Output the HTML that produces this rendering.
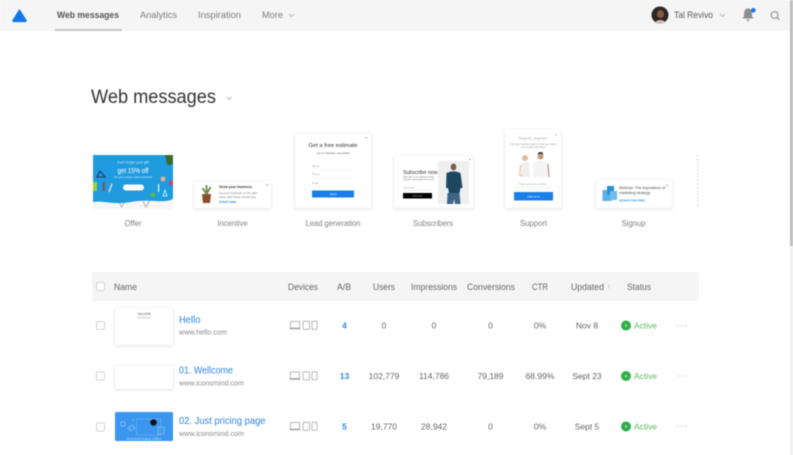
<!DOCTYPE html>
<html><head><meta charset="utf-8"><title>Web messages</title>
<style>
html,body{margin:0;padding:0;width:793px;height:455px;overflow:hidden;background:#fff}
svg{display:block;filter:blur(.5px)}
text{font-family:"Liberation Sans",sans-serif}
.nav{font-size:9px;fill:#7d7d7d}
.lab{font-size:8px;fill:#808080}
.h{font-size:8.800px;fill:#666}
.c{font-size:8.500px;fill:#666;text-anchor:middle}
.b{font-size:8.500px;fill:#2f86e8;text-anchor:middle;font-weight:bold}
.t{font-size:10px;fill:#2f86e8}
.u{font-size:7.500px;fill:#8a8a8a}
.a{font-size:8.500px;fill:#5cb85c}
.card{fill:#fff;stroke:#f4f4f4;stroke-width:.5;filter:drop-shadow(0 1px 1.500px rgba(0,0,0,.1))}
.box{fill:#fff;stroke:#d4d4d4;stroke-width:1}
.dev{fill:none;stroke:#a8a8a8;stroke-width:.8}
</style></head><body>
<svg width="793" height="455" viewBox="0 0 793 455" xmlns="http://www.w3.org/2000/svg">
<defs>
<g id="devs"><rect x="290.500" y="-4" width="9" height="6.500" class="dev"/><path d="M289.500 3.200h11" stroke="#a0a0a0" stroke-width="1.100"/><rect x="303" y="-4.200" width="6.500" height="8" rx=".8" class="dev"/><rect x="312" y="-4.200" width="5" height="8" rx=".8" class="dev"/></g>
<g id="act"><circle cx="626" cy="0" r="5" fill="#2fae4a"/><path d="M626.700-2.300l-2 2.700h1.500l-.9 2 2-2.700h-1.500z" fill="#fff"/><text x="634" y="3" class="a" textLength="23" lengthAdjust="spacingAndGlyphs">Active</text><circle cx="677.500" cy="0" r=".9" fill="#ddd"/><circle cx="681.500" cy="0" r=".9" fill="#ddd"/><circle cx="685.500" cy="0" r=".9" fill="#ddd"/></g>
</defs>
<rect width="793" height="455" fill="#fff"/>
<!-- header -->
<rect width="790" height="31" fill="#f5f5f5"/>
<path d="M19.500 10L26 20.300Q26.500 21.500 25 21.500H14Q12.500 21.500 13 20.300Z" fill="#1476ea" stroke="#1476ea" stroke-width="1.200" stroke-linejoin="round"/>
<text x="57" y="18" class="nav" style="font-weight:bold;fill:#555" textLength="62" lengthAdjust="spacingAndGlyphs">Web messages</text>
<text x="140" y="18" class="nav" textLength="37" lengthAdjust="spacingAndGlyphs">Analytics</text>
<text x="198" y="18" class="nav" textLength="43" lengthAdjust="spacingAndGlyphs">Inspiration</text>
<text x="262" y="18" class="nav" textLength="21" lengthAdjust="spacingAndGlyphs">More</text>
<path d="M289 14l2.500 2.500 2.500-2.500" fill="none" stroke="#aaa" stroke-width=".8"/>
<rect x="55" y="29" width="67" height="2" fill="#c6c6c6"/>
<circle cx="660" cy="15" r="8.500" fill="#2e2824"/><ellipse cx="660.500" cy="14.500" rx="3.500" ry="4.500" fill="#8a5a3f"/><path d="M657 16q3.500 4 7 0v2q-3.500 3-7 0z" fill="#2a1f1a"/><path d="M655.500 21.500q5-3 9.500 0l-2 1.800h-5.500z" fill="#cfc6b8"/>
<text x="674" y="18" style="font-size:9.500px;fill:#5c5c5c" textLength="39" lengthAdjust="spacingAndGlyphs">Tal Revivo</text>
<path d="M720 14l2.500 2.500 2.500-2.500" fill="none" stroke="#aaa" stroke-width=".8"/>
<path d="M748 8.500q3.500 0 3.800 4l.3 4 1.400 2h-11l1.400-2 .3-4q.300-4 3.800-4zM746.500 19.500h3q-.3 1.700-1.500 1.700t-1.500-1.700z" fill="#8e8e8e"/>
<circle cx="753.300" cy="10.300" r="2.300" fill="#1476ea"/>
<circle cx="774.500" cy="15" r="3.400" fill="none" stroke="#9a9a9a" stroke-width="1.300"/><path d="M777 17.500l2.300 2.300" stroke="#9a9a9a" stroke-width="1.400"/>
<!-- scrollbar -->
<rect x="790" width="3" height="455" fill="#f0f0f0"/><rect x="790" width="3" height="246" fill="#bdbdbd"/>
<!-- title -->
<text x="91" y="103" style="font-size:19.500px;fill:#333" textLength="125" lengthAdjust="spacingAndGlyphs">Web messages</text>
<path d="M226.500 97l2.500 2.500 2.500-2.500" fill="none" stroke="#bbb" stroke-width="1"/>
<!-- offer -->
<rect x="93" y="200" width="80" height="9" fill="#f6f6f6"/>
<path d="M118 199l3.500 8 3.500-6M143 201l3 6 4.500-8" fill="none" stroke="#b5b5b5" stroke-width="1"/>
<path d="M93 155h80v44q-6 3-18 2-14-1-24 1-12 2-22 .5-10-1.500-16-.5z" fill="#1f9be0"/>
<path d="M165 155h8v9q-4 2-6 0z" fill="#3b6a2c"/>
<text x="133" y="163.500" text-anchor="middle" style="font-size:3.500px;fill:#cfeaf9">Don't forget your gift</text>
<text x="133" y="173" text-anchor="middle" style="font-size:7.500px;fill:#fff" textLength="31" lengthAdjust="spacingAndGlyphs">get 15% off</text>
<text x="133" y="178" text-anchor="middle" style="font-size:2.500px;fill:#d5eefb">Use your coupon code at checkout</text>
<rect x="123" y="184.500" width="21" height="6" rx="3" fill="#fff"/>
<path d="M100 171l-3 6h8z" fill="none" stroke="#21446a" stroke-width="1.300"/>
<rect x="93" y="182" width="4" height="9" fill="#9fcf3a"/><rect x="103" y="182" width="1.500" height="9" fill="#a33"/><rect x="110" y="183" width="1.500" height="9" fill="#ddd" transform="rotate(20 110 187)"/>
<circle cx="163" cy="179" r="2.500" fill="#e0b090"/><circle cx="153" cy="195" r="2.500" fill="#5fb548"/><rect x="169" y="181" width="4" height="4" fill="#e2336b"/><path d="M165 190l-2 6h4z" fill="none" stroke="#dff" stroke-width=".8"/><rect x="158" y="184" width="1.200" height="8" fill="#eee"/>
<!-- incentive -->
<rect x="194" y="181" width="77" height="27" class="card"/>
<path d="M202 194h9l-1 9h-7z" fill="#8a4f2a"/><path d="M206.500 194l-4-6M206.500 194v-9M206.500 194l4-7" stroke="#6f8d4c" stroke-width="1.800"/>
<text x="219" y="188" style="font-size:3.800px;font-weight:bold;fill:#333" textLength="33" lengthAdjust="spacingAndGlyphs">Grow your business</text>
<text x="219" y="194" style="font-size:2.800px;fill:#777" textLength="38" lengthAdjust="spacingAndGlyphs">Get your business on the right</text>
<text x="219" y="198" style="font-size:2.800px;fill:#777" textLength="37" lengthAdjust="spacingAndGlyphs">track with these simple tips</text>
<text x="219" y="203" style="font-size:2.800px;font-weight:bold;fill:#1a7fe8" textLength="17" lengthAdjust="spacingAndGlyphs">START NOW</text>
<text x="266" y="186" style="font-size:4px;fill:#555">×</text>
<!-- lead -->
<rect x="295" y="133" width="76" height="75" class="card"/>
<text x="333" y="147" text-anchor="middle" style="font-size:5.500px;fill:#333" textLength="49" lengthAdjust="spacingAndGlyphs">Get a free estimate</text>
<text x="333" y="154" text-anchor="middle" style="font-size:3px;fill:#666" textLength="33" lengthAdjust="spacingAndGlyphs">Join our newsletter, stay updated</text>
<text x="312" y="167" style="font-size:2.800px;fill:#aaa">Name</text><path d="M312 170h42" stroke="#eee" stroke-width=".6"/>
<text x="312" y="175" style="font-size:2.800px;fill:#aaa">Phone</text><path d="M312 178h42" stroke="#eee" stroke-width=".6"/>
<text x="312" y="184" style="font-size:2.800px;fill:#aaa">Email</text><path d="M312 186.500h42" stroke="#eee" stroke-width=".6"/>
<rect x="312" y="190.500" width="42" height="7" fill="#1a7fe8"/>
<text x="333" y="195" text-anchor="middle" style="font-size:2.800px;fill:#fff">Send</text>
<text x="365" y="139" style="font-size:4px;fill:#555">×</text>
<!-- subscribers -->
<rect x="394" y="156" width="79" height="52" class="card"/>
<rect x="438" y="161" width="31" height="43" fill="#eef0f0"/>
<ellipse cx="453.500" cy="167" rx="2.800" ry="3.500" fill="#7e5a45"/>
<path d="M446.500 173l4.500-1.500h5l4.500 1.500 2 15h-2l-1 5h-10.500l-1-5h-2z" fill="#1f4760"/>
<path d="M447.500 193h12l1 11h-5.500l-1-5-1 5h-6z" fill="#3d6585"/>
<text x="403" y="174" style="font-size:5.500px;fill:#333" textLength="34.500" lengthAdjust="spacingAndGlyphs">Subscribe now</text>
<text x="403" y="177.500" style="font-size:2.200px;fill:#555" textLength="31" lengthAdjust="spacingAndGlyphs">Subscribe to our mailing list today</text>
<text x="403" y="180" style="font-size:2.200px;fill:#555" textLength="31" lengthAdjust="spacingAndGlyphs">and get a special gift just for you</text>
<text x="403" y="188.500" style="font-size:2.400px;fill:#aaa">Your email</text><path d="M403 190.500h29" stroke="#e5e5e5" stroke-width=".5"/>
<rect x="403" y="193" width="29" height="5.500" fill="#000"/>
<text x="417.500" y="196.700" text-anchor="middle" style="font-size:2.200px;fill:#ccc">Subscribe</text>
<text x="469" y="160.500" style="font-size:3.500px;fill:#555">×</text>
<!-- support -->
<rect x="505" y="129" width="56" height="79" class="card"/>
<text x="533" y="139.500" text-anchor="middle" style="font-size:3.500px;fill:#aaa" textLength="29" lengthAdjust="spacingAndGlyphs">Support, anyone?</text>
<text x="533" y="145" text-anchor="middle" style="font-size:2.300px;fill:#999" textLength="46" lengthAdjust="spacingAndGlyphs">Our team members want to meet you, share</text>
<text x="533" y="148" text-anchor="middle" style="font-size:2.300px;fill:#999" textLength="24" lengthAdjust="spacingAndGlyphs">your number with them</text>
<circle cx="525" cy="158" r="3" fill="#e2bb9f"/><path d="M521 163l4-1.500 4 1.500 1 14h-10z" fill="#f1eeec"/><path d="M520.500 165l-1 10 3 .5" stroke="#e2bb9f" stroke-width="1" fill="none"/>
<circle cx="540.500" cy="156.500" r="3" fill="#c99876"/><path d="M534 162l6.500-1.500 6.500 1.500 1 15h-15z" fill="#f4f4f4"/><path d="M548 164l1 13" stroke="#b07e5e" stroke-width="1"/><path d="M538 154q2.500-2.500 5 0" stroke="#222" stroke-width="1.300" fill="none"/>
<text x="533" y="185" text-anchor="middle" style="font-size:2.500px;fill:#aaa">Type your phone number</text>
<path d="M514 188h38" stroke="#e8e8e8" stroke-width=".5"/>
<rect x="514" y="192" width="39" height="8.500" fill="#1a7fe8"/>
<text x="533.500" y="197.500" text-anchor="middle" style="font-size:2.800px;fill:#fff">Call me in</text>
<text x="555" y="136" style="font-size:3.500px;fill:#999">×</text>
<!-- signup -->
<rect x="596" y="180" width="76" height="28" class="card"/>
<rect x="602.500" y="190" width="9" height="11" fill="#5eb0ea"/><rect x="607" y="186" width="7" height="9" fill="#2b8ed8"/><rect x="610" y="191" width="7" height="9" fill="#6cbcee"/>
<text x="619" y="189" style="font-size:3.500px;fill:#444" textLength="46" lengthAdjust="spacingAndGlyphs">Webinar: The importance of</text>
<text x="619" y="194" style="font-size:3.500px;fill:#444" textLength="31" lengthAdjust="spacingAndGlyphs">marketing strategy</text>
<text x="619" y="201.500" style="font-size:2.800px;font-weight:bold;fill:#2f8fe8" textLength="26" lengthAdjust="spacingAndGlyphs">SIGNUP FOR FREE</text>
<text x="666" y="186.500" style="font-size:4px;fill:#555">×</text>
<!-- partial -->
<path d="M698 155.500h-.5v52h.5" fill="none" stroke="#ccc" stroke-width=".7" stroke-dasharray="2 1.500"/>
<!-- labels -->
<text x="133" y="226" text-anchor="middle" class="lab" textLength="17" lengthAdjust="spacingAndGlyphs">Offer</text>
<text x="232.500" y="226" text-anchor="middle" class="lab" textLength="30" lengthAdjust="spacingAndGlyphs">Incentive</text>
<text x="333" y="226" text-anchor="middle" class="lab" textLength="55" lengthAdjust="spacingAndGlyphs">Lead generation</text>
<text x="433" y="226" text-anchor="middle" class="lab" textLength="40" lengthAdjust="spacingAndGlyphs">Subscribers</text>
<text x="533.500" y="226" text-anchor="middle" class="lab" textLength="27" lengthAdjust="spacingAndGlyphs">Support</text>
<text x="633.500" y="226" text-anchor="middle" class="lab" textLength="24" lengthAdjust="spacingAndGlyphs">Signup</text>
<!-- table header -->
<rect x="92" y="272" width="607" height="29" fill="#f5f5f5"/>
<rect x="96.500" y="282.500" width="8" height="8" rx="1.200" class="box"/>
<text x="114" y="290" class="h" textLength="23" lengthAdjust="spacingAndGlyphs">Name</text>
<text x="288" y="290" class="h" textLength="30" lengthAdjust="spacingAndGlyphs">Devices</text>
<text x="337" y="290" class="h" textLength="14" lengthAdjust="spacingAndGlyphs">A/B</text>
<text x="373" y="290" class="h" textLength="22" lengthAdjust="spacingAndGlyphs">Users</text>
<text x="411" y="290" class="h" textLength="46" lengthAdjust="spacingAndGlyphs">Impressions</text>
<text x="467" y="290" class="h" textLength="48" lengthAdjust="spacingAndGlyphs">Conversions</text>
<text x="532" y="290" class="h" textLength="16" lengthAdjust="spacingAndGlyphs">CTR</text>
<text x="571" y="290" class="h" textLength="33" lengthAdjust="spacingAndGlyphs">Updated</text>
<path d="M609 284.500v4" stroke="#ccc" stroke-width="1"/>
<text x="627" y="290" class="h" textLength="24" lengthAdjust="spacingAndGlyphs">Status</text>
<!-- rows -->
<rect x="96.500" y="321.500" width="8" height="8" rx="1.200" class="box"/>
<rect x="96.500" y="372" width="8" height="8" rx="1.200" class="box"/>
<rect x="96.500" y="423" width="8" height="8" rx="1.200" class="box"/>
<rect x="115" y="308" width="58" height="37" class="card"/>
<text x="144" y="315" text-anchor="middle" style="font-size:3.500px;fill:#555" textLength="13" lengthAdjust="spacingAndGlyphs">Click to edit title</text>
<text x="144" y="318.500" text-anchor="middle" style="font-size:2.500px;fill:#999" textLength="13" lengthAdjust="spacingAndGlyphs">Click to edit description</text>
<rect x="115" y="365" width="58" height="24" class="card"/>
<rect x="115" y="412" width="58" height="29" rx="1.500" fill="#3a96ee"/>
<rect x="136.500" y="419" width="24" height="16" fill="none" stroke="#7fbdf5" stroke-width=".5"/>
<circle cx="153.500" cy="422.500" r="3.200" fill="#111"/>
<path d="M121 422h4v4h-4zM128 428l4-3 3 3-4 3zM158 427h6v7h-6zM132 421l2-2" fill="none" stroke="#8cc4f6" stroke-width=".8"/>
<text x="144" y="440" text-anchor="middle" style="font-size:3.500px;fill:#b7dcfb" textLength="35" lengthAdjust="spacingAndGlyphs">Anniversary offer</text>
<text x="179" y="323" class="t" textLength="21.500" lengthAdjust="spacingAndGlyphs">Hello</text>
<text x="179" y="334.500" class="u" textLength="48" lengthAdjust="spacingAndGlyphs">www.hello.com</text>
<text x="179" y="373.500" class="t" textLength="54" lengthAdjust="spacingAndGlyphs">01. Wellcome</text>
<text x="179" y="385.500" class="u" textLength="65" lengthAdjust="spacingAndGlyphs">www.iconsmind.com</text>
<text x="179" y="424" class="t" textLength="86.500" lengthAdjust="spacingAndGlyphs">02. Just pricing page</text>
<text x="179" y="436" class="u" textLength="65" lengthAdjust="spacingAndGlyphs">www.iconsmind.com</text>
<use href="#devs" y="325.500"/><use href="#devs" y="376"/><use href="#devs" y="426.500"/>
<text x="344.500" y="328.500" class="b">4</text><text x="344.500" y="379" class="b">13</text><text x="344.500" y="429.500" class="b">5</text>
<text x="384" y="328.500" class="c">0</text><text x="434" y="328.500" class="c">0</text><text x="490.500" y="328.500" class="c">0</text><text x="540" y="328.500" class="c">0%</text><text x="587" y="328.500" class="c">Nov 8</text>
<text x="384" y="379" class="c">102,779</text><text x="434" y="379" class="c">114,786</text><text x="490.500" y="379" class="c">79,189</text><text x="540" y="379" class="c">68.99%</text><text x="587" y="379" class="c">Sept 23</text>
<text x="384" y="429.500" class="c">19,770</text><text x="434" y="429.500" class="c">28,942</text><text x="490.500" y="429.500" class="c">0</text><text x="540" y="429.500" class="c">0%</text><text x="587" y="429.500" class="c">Sept 5</text>
<use href="#act" y="325.500"/><use href="#act" y="376"/><use href="#act" y="426.500"/>
</svg>
</body></html>
